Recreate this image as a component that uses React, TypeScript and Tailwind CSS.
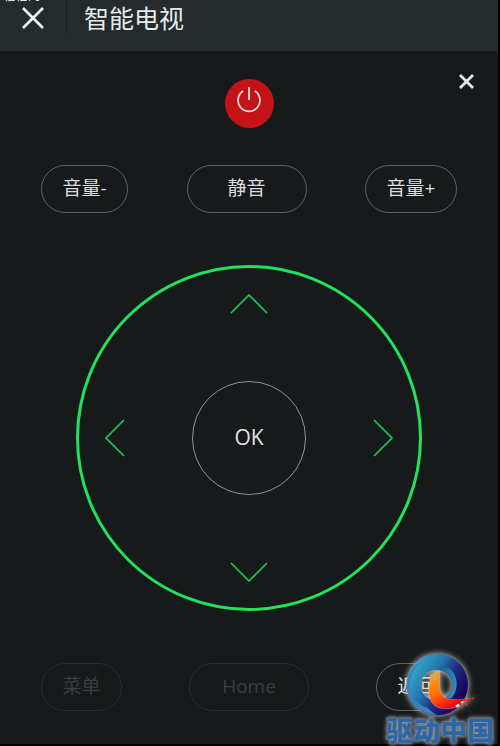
import type { ReactNode } from "react";

interface PillButtonProps {
  children: ReactNode;
  width: string;
  disabled?: boolean;
}

const PillButton = ({ children, width, disabled = false }: PillButtonProps) => {
  return (
    <button
      type="button"
      disabled={disabled}
      className={`h-12 shrink-0 rounded-full border pb-0.5 text-[19px] leading-6 whitespace-nowrap ${width} ${
        disabled ? "border-[#2b2e30] text-[#3b3d40]" : "border-[#5d6063] text-[#dcdddf]"
      }`}
    >
      {children}
    </button>
  );
};

interface ArrowButtonProps {
  label: string;
  path: string;
  vertical?: boolean;
  className: string;
}

const ArrowButton = ({ label, path, vertical = false, className }: ArrowButtonProps) => {
  return (
    <button type="button" aria-label={label} className={className}>
      <svg
        width={vertical ? 38 : 20}
        height={vertical ? 20 : 38}
        fill="none"
        stroke="#1fc755"
        strokeWidth="1.7"
      >
        <path d={path} />
      </svg>
    </button>
  );
};

const BrandLogo = () => {
  return (
    <div className="pointer-events-none absolute right-1 bottom-0 flex flex-col items-center">
      <svg
        width="72"
        height="64"
        viewBox="0 0 216 192"
        className="ml-[3px] overflow-visible drop-shadow-[0_0_3px_#e0e0e0]"
      >
        <defs>
          <linearGradient id="ring" x1="0.1" y1="0.2" x2="0.9" y2="0.7">
            <stop offset="0" stopColor="#38a9c8" />
            <stop offset="0.4" stopColor="#2272ad" />
            <stop offset="0.65" stopColor="#202c80" />
            <stop offset="1" stopColor="#17005c" />
          </linearGradient>
          <linearGradient id="inner" x1="0" y1="0" x2="1" y2="0.5">
            <stop offset="0" stopColor="#176093" />
            <stop offset="1" stopColor="#3286bb" />
          </linearGradient>
          <linearGradient id="bird" x1="0.1" y1="0" x2="0.7" y2="1">
            <stop offset="0" stopColor="#ffad12" />
            <stop offset="0.5" stopColor="#ff6a0c" />
            <stop offset="0.85" stopColor="#f50d0d" />
          </linearGradient>
        </defs>
        <path
          fill="url(#ring)"
          fillRule="evenodd"
          d="M94 3a92 92 0 1 1 0 184a92 92 0 1 1 0-184zM92 51C64 51 44 71 44 97c0 25 20 45 46 45c27 0 49-20 49-46c0-25-20-45-47-45z"
        />
        <path
          fill="url(#inner)"
          d="M92 51c13-14 36-11 49 6c17 23 14 59-5 79l-28 2c19-9 31-24 31-42c0-25-20-45-47-45z"
        />
        <path
          fill="#3983bd"
          d="M65 164C27 154 5 118 13 79C18 54 33 35 53 23C13 38-5 80 5 120c12 41 48 65 87 66c-9-6-19-13-27-22z"
        />
        <path
          fill="url(#bird)"
          stroke="#d4cbd1"
          strokeWidth="1"
          d="M72 67L101 53v44c0 25 9 38 30 41c18 3 38 0 60-1l-16 9l-17 16l-30 5c-36 2-56-12-59-45c-2-23 7-36 3-55z"
        />
        <circle cx="87" cy="74" r="7" fill="#b8aa9f" />
        <path
          fill="#ff2020"
          d="M183 140l10-6v7l-9 6zm12-4l11-5l-6 9zm-17 18l9-3l-5 8zm-12 10l8-3l-4 6z"
        />
        <path fill="#fff" d="M149 157l9-5l3 8l-11 3zm17-11l8-3l-4 7l-7 1z" />
      </svg>
      <span className="-mt-px font-['Noto_Sans_CJK_SC',sans-serif] text-[27px] leading-7 font-black text-[#2c66a6] text-shadow-[0_0_2px_#8f8f8f,0_0_4px_#9a9a9a,0_0_5px_#8b8b8b]">
        驱动中国
      </span>
    </div>
  );
};

const App = () => {
  return (
    <div className="relative border-r-2 border-b-2 border-black bg-[#161a1b] font-['Open_Sans','Noto_Sans_CJK_SC',sans-serif]">
      <header className="relative flex h-[51px] items-start overflow-hidden bg-[#232b2d] pl-[22px]">
        {/* Carrier name, mostly scrolled out of view */}
        <span className="absolute -top-3 left-1 text-[12px] leading-4 text-white">信信网</span>
        <button type="button" aria-label="关闭" className="mt-[7px]">
          <svg width="22" height="22" stroke="#f4f4f4" strokeWidth="2.6">
            <path d="M1 1L21 21M21 1L1 21" />
          </svg>
        </button>
        <span className="ml-[22px] h-[34px] w-px bg-[#151a1c]" />
        <h1 className="ml-[17px] text-[25px] leading-9 text-[#e7e9ea]">智能电视</h1>
      </header>

      <main className="pt-[28px] pb-[33px]">
        {/* Power */}
        <div className="grid grid-cols-[1fr_auto_1fr] items-start pr-6">
          <span />
          <button
            type="button"
            aria-label="电源"
            className="ml-6 flex size-[49px] items-start justify-center rounded-full bg-[#c41317] pt-[8px]"
          >
            <svg width="26" height="26" fill="none" stroke="#f7dede" strokeWidth="1.8">
              <path d="M7.2 4A11 11 0 1 0 18.8 4M13 0v13" />
            </svg>
          </button>
          <button type="button" aria-label="关闭遥控器" className="-mt-[5px] justify-self-end">
            <svg width="15" height="15" stroke="#e6e6e8" strokeWidth="2.8">
              <path d="M1 1L14 14M14 1L1 14" />
            </svg>
          </button>
        </div>

        {/* Volume */}
        <div className="mt-[37px] flex justify-between px-[41px]">
          <PillButton width="w-[87px]">音量-</PillButton>
          <PillButton width="w-[120px]">静音</PillButton>
          <PillButton width="w-[92px]">音量+</PillButton>
        </div>

        {/* Direction pad */}
        <div className="mx-auto mt-[52px] grid aspect-square w-full max-w-[346px] grid-cols-[1fr_auto_1fr] grid-rows-[1fr_auto_1fr] rounded-full border-3 border-[#20e25c] p-[26px]">
          <ArrowButton
            label="上"
            vertical
            path="M1 19L19 1L37 19"
            className="col-start-2 row-start-1 self-start justify-self-center"
          />
          <ArrowButton
            label="左"
            path="M19 1L1 19L19 37"
            className="col-start-1 row-start-2 self-center justify-self-start"
          />
          <button
            type="button"
            className="col-start-2 row-start-2 size-[114px] rounded-full border border-[#8d8f92] pb-0.5 text-[21px] leading-7 text-[#e0e1e3]"
          >
            OK
          </button>
          <ArrowButton
            label="右"
            path="M1 1L19 19L1 37"
            className="col-start-3 row-start-2 self-center justify-self-end"
          />
          <ArrowButton
            label="下"
            vertical
            path="M1 1L19 19L37 1"
            className="col-start-2 row-start-3 self-end justify-self-center"
          />
        </div>

        {/* Navigation */}
        <div className="mt-[52px] flex justify-between px-[41px]">
          <PillButton width="w-[81px]" disabled>
            菜单
          </PillButton>
          <PillButton width="w-[120px]" disabled>
            Home
          </PillButton>
          <PillButton width="w-[81px]">返回</PillButton>
        </div>
      </main>

      <BrandLogo />
    </div>
  );
};

export default App;
